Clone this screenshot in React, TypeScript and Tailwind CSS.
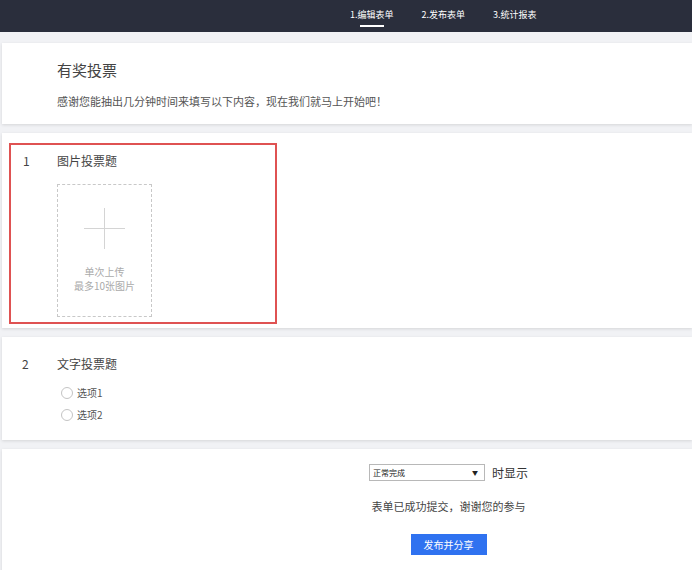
const FONT = { fontFamily: '"Microsoft YaHei", "Noto Sans CJK SC", "Liberation Sans", sans-serif' };

const NAV = ["1.编辑表单", "2.发布表单", "3.统计报表"];

function Card({ className = "", children }: { className?: string; children: React.ReactNode }) {
  return (
    <div className={`ml-[2px] bg-white shadow-[0_1px_3px_rgba(0,0,0,0.12)] ${className}`}>{children}</div>
  );
}

export default function App() {
  return (
    <div className="h-[570px] w-[692px] overflow-hidden bg-[#f1f2f5]" style={FONT}>
      <header className="flex h-[32px] items-start justify-start gap-[28px] bg-[#2a2e3c] pl-[350px]">
        {NAV.map((item, i) => (
          <div key={item} className="relative pt-[8px] text-[9px] leading-[13px] text-white">
            {item}
            {i === 0 && <div className="ml-[10px] mt-[4px] h-[2px] w-[24px] bg-white" />}
          </div>
        ))}
      </header>

      <div className="flex flex-col gap-[9px] pt-[11px]">
        <Card className="h-[81px] pl-[55px] pt-[17px]">
          <div className="text-[15px] leading-[20px] text-[#444]">有奖投票</div>
          <div className="mt-[13px] text-[11px] leading-[16px] text-[#555]">
            感谢您能抽出几分钟时间来填写以下内容，现在我们就马上开始吧！
          </div>
        </Card>

        <Card className="h-[195px] pl-[7px] pt-[10px]">
          <div className="h-[181px] w-[268px] border-2 border-[#df5252] pl-[12px] pt-[8px]">
            <div className="flex text-[12px] leading-[16px] text-[#444]">
              <span className="w-[34px]">1</span>
              <span>图片投票题</span>
            </div>
            <div className="ml-[34px] mt-[15px] flex h-[133px] w-[95px] flex-col items-center border border-dashed border-[#c8c8c8]">
              <div className="relative mt-[23px] h-[41px] w-[41px]">
                <div className="absolute left-0 top-[20px] h-px w-[41px] bg-[#d4d4d4]" />
                <div className="absolute left-[20px] top-0 h-[41px] w-px bg-[#d4d4d4]" />
              </div>
              <div className="mt-[16px] flex flex-col items-center text-[10px] leading-[14px] text-[#aaa]">
                <span>单次上传</span>
                <span>最多10张图片</span>
              </div>
            </div>
          </div>
        </Card>

        <Card className="h-[103px] pl-[20px] pt-[19px]">
          <div className="flex text-[12px] leading-[16px] text-[#444]">
            <span className="w-[35px]">2</span>
            <span>文字投票题</span>
          </div>
          <div className="ml-[39px] mt-[15px] flex flex-col gap-[10px]">
            {["选项1", "选项2"].map((o) => (
              <label key={o} className="flex items-center text-[10px] leading-[12px] text-[#555]">
                <span className="mr-[4px] h-[12px] w-[12px] rounded-full border border-[#c4c4c4] bg-white" />
                {o}
              </label>
            ))}
          </div>
        </Card>

        <Card className="flex h-[130px] flex-col items-center pl-[203px] pt-[15px]">
          <div className="flex items-center">
            <div className="flex h-[17px] w-[116px] items-center justify-between border border-[#b8b8b8] bg-white pl-[3px] pr-[6px]">
              <span className="text-[8px] leading-[10px] text-[#222]">正常完成</span>
              <span className="text-[6px] leading-[8px] text-[#222]">▼</span>
            </div>
            <span className="ml-[7px] text-[12px] leading-[16px] text-[#333]">时显示</span>
          </div>
          <div className="mt-[17px] text-[11px] leading-[16px] text-[#444]">表单已成功提交，谢谢您的参与</div>
          <button className="mt-[20px] h-[21px] w-[76px] bg-[#2f72f0] text-[10px] leading-[14px] text-white">
            发布并分享
          </button>
        </Card>
      </div>
    </div>
  );
}
